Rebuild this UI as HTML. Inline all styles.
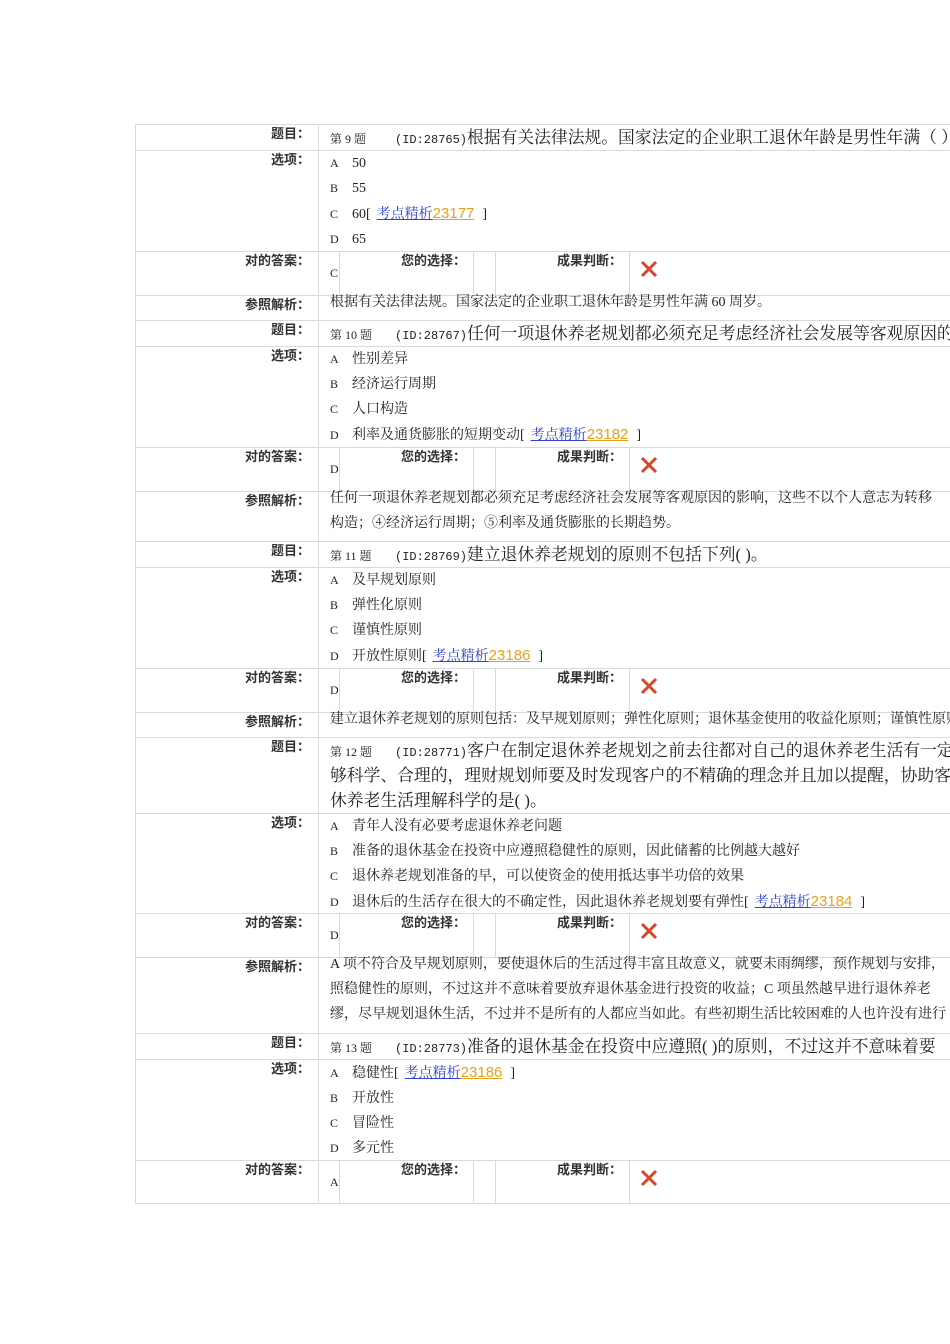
<!DOCTYPE html>
<html><head><meta charset="utf-8"><style>
html,body{margin:0;padding:0;background:#fff;width:950px;height:1344px;overflow:hidden;position:relative}
.h{position:absolute;left:135px;width:815px;height:1px;background:#d9d9d9}
.v{position:absolute;width:1px;background:#d9d9d9}
.l{position:absolute;left:135px;width:175px;text-align:right;font:bold 13px "Liberation Sans","Noto Sans CJK SC",sans-serif;color:#333;line-height:18px}
.t{position:absolute;left:330px;white-space:nowrap;font:14px "Liberation Serif","Noto Serif CJK SC",serif;color:#222;line-height:25px;width:620px;overflow:hidden}
.q{font-size:16.8px}
.p{font:12px "Liberation Serif","Noto Serif CJK SC",serif;display:inline-block;width:65px}
.s{font:12px "Liberation Mono",monospace}
.o{font:12px "Liberation Serif",serif;display:inline-block;width:22px}
.k{color:#3344cc;text-decoration:underline;margin-left:6px}
.n{color:#e8a020;font-family:"Liberation Sans",sans-serif;font-size:15px;text-decoration:underline;text-decoration-color:#e8a020;margin-right:8px}
.x{position:absolute;left:639px;width:20px;height:20px}
.a{position:absolute;left:330px;font:12px "Liberation Serif",serif;color:#222}
</style></head><body>
<div class="h" style="top:124px"></div><div class="h" style="top:150px"></div><div class="h" style="top:251px"></div><div class="h" style="top:295px"></div>
<div class="h" style="top:320px"></div><div class="h" style="top:346px"></div><div class="h" style="top:447px"></div><div class="h" style="top:491px"></div>
<div class="h" style="top:541px"></div><div class="h" style="top:567px"></div><div class="h" style="top:668px"></div><div class="h" style="top:712px"></div>
<div class="h" style="top:737px"></div><div class="h" style="top:813px"></div><div class="h" style="top:913px"></div><div class="h" style="top:957px"></div>
<div class="h" style="top:1033px"></div><div class="h" style="top:1059px"></div><div class="h" style="top:1160px"></div><div class="h" style="top:1203px"></div>
<div class="v" style="left:135px;top:124px;height:1080px"></div>
<div class="v" style="left:318px;top:124px;height:1080px"></div>
<div class="v" style="left:339px;top:251px;height:44px"></div><div class="v" style="left:473px;top:251px;height:44px"></div><div class="v" style="left:495px;top:251px;height:44px"></div><div class="v" style="left:629px;top:251px;height:44px"></div>
<div class="v" style="left:339px;top:447px;height:44px"></div><div class="v" style="left:473px;top:447px;height:44px"></div><div class="v" style="left:495px;top:447px;height:44px"></div><div class="v" style="left:629px;top:447px;height:44px"></div>
<div class="v" style="left:339px;top:668px;height:44px"></div><div class="v" style="left:473px;top:668px;height:44px"></div><div class="v" style="left:495px;top:668px;height:44px"></div><div class="v" style="left:629px;top:668px;height:44px"></div>
<div class="v" style="left:339px;top:913px;height:44px"></div><div class="v" style="left:473px;top:913px;height:44px"></div><div class="v" style="left:495px;top:913px;height:44px"></div><div class="v" style="left:629px;top:913px;height:44px"></div>
<div class="v" style="left:339px;top:1160px;height:43px"></div><div class="v" style="left:473px;top:1160px;height:43px"></div><div class="v" style="left:495px;top:1160px;height:43px"></div><div class="v" style="left:629px;top:1160px;height:43px"></div>

<div class="l" style="top:125px">题目：</div>
<div class="t q" style="top:125px"><span class="p">第 9 题</span><span class="s">(ID:28765)</span>根据有关法律法规。国家法定的企业职工退休年龄是男性年满（ ）</div>
<div class="l" style="top:151px">选项：</div>
<div class="t" style="top:151px"><span class="o">A</span>50<br><span class="o">B</span>55<br><span class="o">C</span>60[<span class="k">考点精析</span><span class="n">23177</span>]<br><span class="o">D</span>65</div>
<div class="l" style="top:252px">对的答案：</div>
<div class="a" style="top:266px">C</div>
<div class="l" style="top:252px;left:339px;width:127px">您的选择：</div>
<div class="l" style="top:252px;left:495px;width:127px">成果判断：</div>
<svg class="x" style="top:259px" viewBox="0 0 20 20"><path d="M3 3L17 17M17 3L3 17" stroke="#d9452a" stroke-width="3"/></svg>
<div class="l" style="top:296px">参照解析：</div>
<div class="t" style="top:290px">根据有关法律法规。国家法定的企业职工退休年龄是男性年满 60 周岁。</div>

<div class="l" style="top:321px">题目：</div>
<div class="t q" style="top:321px"><span class="p">第 10 题</span><span class="s">(ID:28767)</span>任何一项退休养老规划都必须充足考虑经济社会发展等客观原因的影响</div>
<div class="l" style="top:347px">选项：</div>
<div class="t" style="top:347px"><span class="o">A</span>性别差异<br><span class="o">B</span>经济运行周期<br><span class="o">C</span>人口构造<br><span class="o">D</span>利率及通货膨胀的短期变动[<span class="k">考点精析</span><span class="n">23182</span>]</div>
<div class="l" style="top:448px">对的答案：</div>
<div class="a" style="top:462px">D</div>
<div class="l" style="top:448px;left:339px;width:127px">您的选择：</div>
<div class="l" style="top:448px;left:495px;width:127px">成果判断：</div>
<svg class="x" style="top:455px" viewBox="0 0 20 20"><path d="M3 3L17 17M17 3L3 17" stroke="#d9452a" stroke-width="3"/></svg>
<div class="l" style="top:492px">参照解析：</div>
<div class="t" style="top:486px">任何一项退休养老规划都必须充足考虑经济社会发展等客观原因的影响，这些不以个人意志为转移<br>构造；④经济运行周期；⑤利率及通货膨胀的长期趋势。</div>

<div class="l" style="top:542px">题目：</div>
<div class="t q" style="top:542px"><span class="p">第 11 题</span><span class="s">(ID:28769)</span>建立退休养老规划的原则不包括下列( )。</div>
<div class="l" style="top:568px">选项：</div>
<div class="t" style="top:568px"><span class="o">A</span>及早规划原则<br><span class="o">B</span>弹性化原则<br><span class="o">C</span>谨慎性原则<br><span class="o">D</span>开放性原则[<span class="k">考点精析</span><span class="n">23186</span>]</div>
<div class="l" style="top:669px">对的答案：</div>
<div class="a" style="top:683px">D</div>
<div class="l" style="top:669px;left:339px;width:127px">您的选择：</div>
<div class="l" style="top:669px;left:495px;width:127px">成果判断：</div>
<svg class="x" style="top:676px" viewBox="0 0 20 20"><path d="M3 3L17 17M17 3L3 17" stroke="#d9452a" stroke-width="3"/></svg>
<div class="l" style="top:713px">参照解析：</div>
<div class="t" style="top:707px">建立退休养老规划的原则包括：及早规划原则；弹性化原则；退休基金使用的收益化原则；谨慎性原则</div>

<div class="l" style="top:738px">题目：</div>
<div class="t q" style="top:738px"><span class="p">第 12 题</span><span class="s">(ID:28771)</span>客户在制定退休养老规划之前去往都对自己的退休养老生活有一定<br>够科学、合理的，理财规划师要及时发现客户的不精确的理念并且加以提醒，协助客<br>休养老生活理解科学的是( )。</div>
<div class="l" style="top:814px">选项：</div>
<div class="t" style="top:814px"><span class="o">A</span>青年人没有必要考虑退休养老问题<br><span class="o">B</span>准备的退休基金在投资中应遵照稳健性的原则，因此储蓄的比例越大越好<br><span class="o">C</span>退休养老规划准备的早，可以使资金的使用抵达事半功倍的效果<br><span class="o">D</span>退休后的生活存在很大的不确定性，因此退休养老规划要有弹性[<span class="k">考点精析</span><span class="n">23184</span>]</div>
<div class="l" style="top:914px">对的答案：</div>
<div class="a" style="top:928px">D</div>
<div class="l" style="top:914px;left:339px;width:127px">您的选择：</div>
<div class="l" style="top:914px;left:495px;width:127px">成果判断：</div>
<svg class="x" style="top:921px" viewBox="0 0 20 20"><path d="M3 3L17 17M17 3L3 17" stroke="#d9452a" stroke-width="3"/></svg>
<div class="l" style="top:958px">参照解析：</div>
<div class="t" style="top:952px">A 项不符合及早规划原则，要使退休后的生活过得丰富且故意义，就要未雨绸缪，预作规划与安排，<br>照稳健性的原则，不过这并不意味着要放弃退休基金进行投资的收益；C 项虽然越早进行退休养老<br>缪，尽早规划退休生活，不过并不是所有的人都应当如此。有些初期生活比较困难的人也许没有进行</div>

<div class="l" style="top:1034px">题目：</div>
<div class="t q" style="top:1034px"><span class="p">第 13 题</span><span class="s">(ID:28773)</span>准备的退休基金在投资中应遵照( )的原则，不过这并不意味着要</div>
<div class="l" style="top:1060px">选项：</div>
<div class="t" style="top:1060px"><span class="o">A</span>稳健性[<span class="k">考点精析</span><span class="n">23186</span>]<br><span class="o">B</span>开放性<br><span class="o">C</span>冒险性<br><span class="o">D</span>多元性</div>
<div class="l" style="top:1161px">对的答案：</div>
<div class="a" style="top:1175px">A</div>
<div class="l" style="top:1161px;left:339px;width:127px">您的选择：</div>
<div class="l" style="top:1161px;left:495px;width:127px">成果判断：</div>
<svg class="x" style="top:1168px" viewBox="0 0 20 20"><path d="M3 3L17 17M17 3L3 17" stroke="#d9452a" stroke-width="3"/></svg>
</body></html>
